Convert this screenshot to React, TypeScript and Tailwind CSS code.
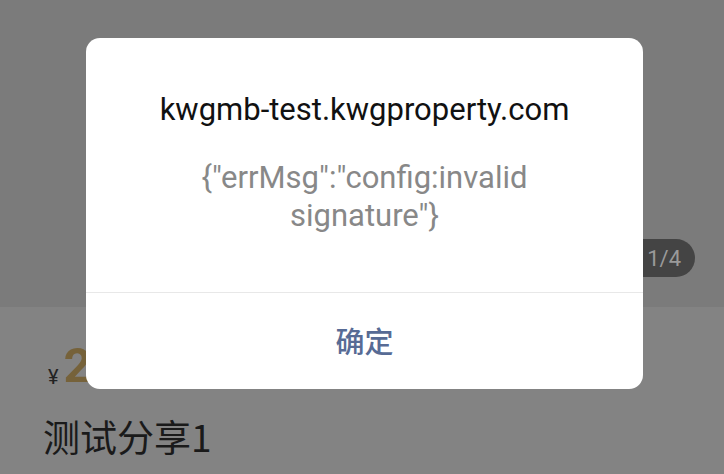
import React from "react";

export default function App() {
  const font = { fontFamily: '"Roboto", "Noto Sans CJK SC", sans-serif' };
  const cjk = { fontFamily: '"Noto Sans CJK SC", sans-serif' };
  return (
    <div className="relative w-[724px] h-[474px] overflow-hidden bg-[#838383]" style={font}>
      <div className="flex flex-col h-full">
        <div className="relative h-[307px] bg-[#7b7b7b] shrink-0">
          <div className="absolute right-[29px] top-[239px] h-[38px] w-[80px] rounded-full bg-[#444444] flex items-center justify-end pr-[14px] text-[22px] text-[#9a9a9a]">
            1/4
          </div>
        </div>
        <div className="flex flex-col pl-[43px] pt-[23px]">
          <div className="flex items-end gap-[5px] h-[60px]">
            <span className="text-[20px] text-[#222] leading-none mb-[3px] ml-[5px]">¥</span>
            <span className="text-[49px] font-bold text-[#76623a] leading-none">2</span>
          </div>
          <div className="mt-[28px] text-[37px] leading-none text-[#1a1a1a]" style={cjk}>
            测试分享1
          </div>
        </div>
      </div>
      <div className="absolute left-[86px] top-[38px] w-[557px] h-[351px] bg-white rounded-[14px] flex flex-col">
        <div className="h-[254px] flex flex-col items-center pt-[55px]">
          <div className="text-[31px] leading-[34px] text-[#111]">kwgmb-test.kwgproperty.com</div>
          <div className="mt-[32px] text-[31px] leading-[38px] text-[#888] text-center w-[380px]">
            {'{"errMsg":"config:invalid signature"}'}
          </div>
        </div>
        <div className="h-px bg-[#e8e8e8]" />
        <div className="flex-1 flex items-center justify-center">
          <span className="text-[29px] text-[#576b95] font-medium" style={cjk}>确定</span>
        </div>
      </div>
    </div>
  );
}
